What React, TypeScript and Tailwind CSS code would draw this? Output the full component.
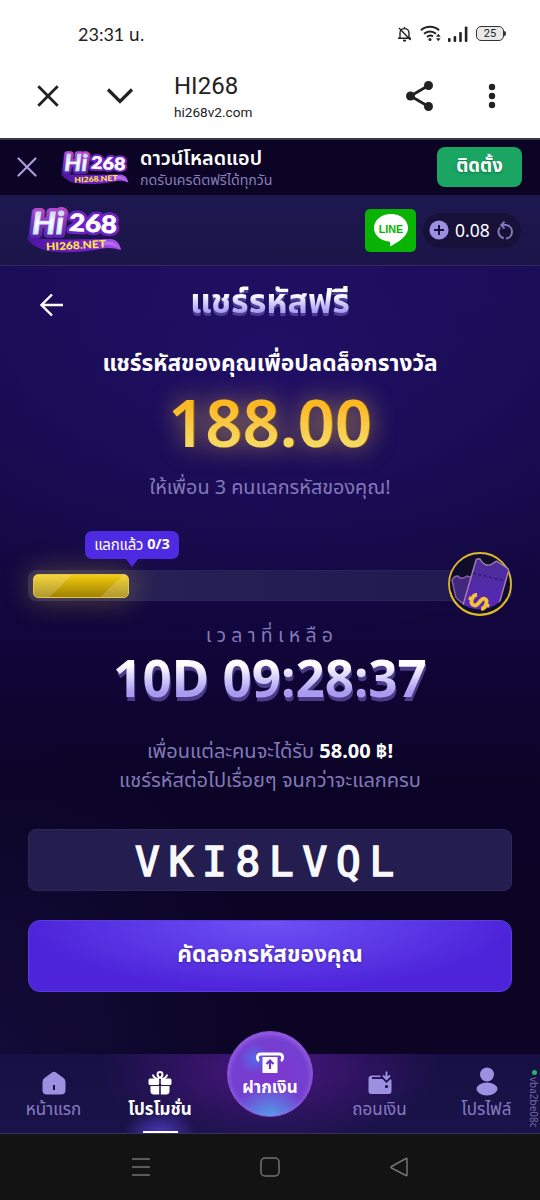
import type { ReactNode } from 'react';

function StatusBar() {
    return (
        <div className="flex h-14 items-center justify-between bg-white pt-[11px] pr-[34px] pl-[78px] text-[#222]">
            <span className="font-['Lato','Noto_Sans_Thai','Noto_Sans',sans-serif] text-[18px] leading-6">23:31 น.</span>
            <div className="flex items-center">
                <svg width="15" height="16" viewBox="0 0 15 16" fill="none" stroke="currentColor" strokeWidth="1.4">
                    <path d="M3 12V7C3 4 5 2.6 7.5 2.6S12 4 12 7v5M1 12.3h13M7.5 1v1.6M2 2l11.5 12" />
                    <path d="M6 14.6h3" strokeWidth="1.8" />
                </svg>
                <svg className="ml-2" width="23" height="17" viewBox="0 0 23 17" fill="none" stroke="currentColor" strokeWidth="2">
                    <path d="M1 5.2C6 .6 14 .6 19 5.2M4 8.8c3.5-3.1 8.5-3.1 12 0M7 12c1.7-1.5 4-1.8 6-.6" />
                    <circle cx="10" cy="14.5" r="1.5" fill="currentColor" stroke="none" />
                    <path d="M16 11.8l2.3-3 2.3 3zM16 13.2l2.3 3 2.3-3z" fill="currentColor" stroke="none" />
                </svg>
                <svg className="ml-[5px]" width="20" height="16" viewBox="0 0 20 16" fill="currentColor">
                    <rect x="0" y="12" width="2.6" height="4" rx="1" />
                    <rect x="5.6" y="10" width="2.6" height="6" rx="1" />
                    <rect x="11.2" y="6" width="2.6" height="10" rx="1" />
                    <rect x="16.8" y="0.5" width="2.6" height="15.5" rx="1" />
                </svg>
                <div className="ml-[8px] flex h-[15px] w-[28px] items-center justify-center rounded-[5px] border-[1.5px] border-[#333] bg-[#e9e9e9] font-['Roboto',sans-serif] text-[11px] leading-none">
                    25
                </div>
                <div className="h-[5px] w-[2px] rounded-r bg-[#333]" />
            </div>
        </div>
    );
}

function BrowserBar() {
    return (
        <div className="flex h-[84px] items-center border-b-2 border-[#3b3948] bg-white pb-[3px] pl-9 font-['Roboto',sans-serif] text-[#222]">
            <svg width="24" height="24" viewBox="0 0 24 24" fill="none" stroke="currentColor" strokeWidth="2.8">
                <path d="M2.3 2.3l19.4 19.4M21.7 2.3L2.3 21.7" />
            </svg>
            <svg className="ml-[46px]" width="28" height="24" viewBox="0 0 28 24" fill="none" stroke="currentColor" strokeWidth="3.2">
                <path d="M2 5.5L14 17.5 26 5.5" />
            </svg>
            <div className="ml-10 flex w-[232px] flex-col">
                <span className="mt-[2px] text-[24px] leading-7">HI268</span>
                <span className="mt-[2px] text-[13.6px] leading-5">hi268v2.com</span>
            </div>
            <svg width="28" height="30" viewBox="0 0 28 30" fill="currentColor">
                <path d="M22.5 4.5L4.5 15l18 10.5" fill="none" stroke="currentColor" strokeWidth="2.8" />
                <circle cx="22.5" cy="4.5" r="4.5" />
                <circle cx="4.5" cy="15" r="4.5" />
                <circle cx="22.5" cy="25.5" r="4.5" />
            </svg>
            <svg className="ml-[54px]" width="8" height="26" viewBox="0 0 8 26" fill="currentColor">
                <circle cx="4" cy="4" r="3.2" />
                <circle cx="4" cy="13" r="3.2" />
                <circle cx="4" cy="22" r="3.2" />
            </svg>
        </div>
    );
}

function Logo({ className }: { className?: string }) {
    return (
        <svg className={className} viewBox="0 0 96 46" overflow="visible">
            <defs>
                <linearGradient id="ribbon" x1="0" x2="1">
                    <stop offset="0" stopColor="#4c16a0" />
                    <stop offset="0.7" stopColor="#7a1fd0" />
                    <stop offset="1" stopColor="#b45cf0" />
                </linearGradient>
                <linearGradient id="ice" x1="0" y1="0" x2="0" y2="1">
                    <stop offset="0" stopColor="#9fb2e2" />
                    <stop offset="0.5" stopColor="#ffffff" />
                    <stop offset="1" stopColor="#a9e6f2" />
                </linearGradient>
                <linearGradient id="halo" x1="0" y1="0" x2="0" y2="1">
                    <stop offset="0" stopColor="#c653cf" />
                    <stop offset="1" stopColor="#4a1fa8" />
                </linearGradient>
            </defs>
            <path d="M1 29c9 5 58 3 84 3 6 1 9 5 10 11-6-2-13-3-21-1-20 4-50 5-61-1-7-3-11-7-12-12z" fill="url(#ribbon)" />
            <path d="M76 34c7-1 13 1 16 6-6-2-11-2-17-1z" fill="#c07af2" opacity="0.7" />
            <g strokeLinejoin="round" fontStyle="italic" fontFamily="'Lato', sans-serif" fontWeight="700" fontSize="31">
                <text x="6" y="27" textLength="32" lengthAdjust="spacingAndGlyphs" fill="url(#halo)" stroke="url(#halo)" strokeWidth="8">Hi</text>
                <text x="6" y="27" textLength="32" lengthAdjust="spacingAndGlyphs" fill="url(#ice)" stroke="#d5e4ff" strokeWidth="1">Hi</text>
            </g>
            <g strokeLinejoin="round" fontFamily="'Lato', sans-serif" fontWeight="900" fontSize="24" transform="rotate(3 66 18)">
                <text x="43" y="25" textLength="48" lengthAdjust="spacingAndGlyphs" fill="#6d22c4" stroke="#6d22c4" strokeWidth="6">268</text>
                <text x="43" y="25" textLength="48" lengthAdjust="spacingAndGlyphs" fill="#ffffff" stroke="#ffffff" strokeWidth="0.6">268</text>
            </g>
            <text
                x="20"
                y="42"
                fontFamily="'Lato', sans-serif"
                fontWeight="900"
                fontSize="10.5"
                textLength="60"
                lengthAdjust="spacingAndGlyphs"
                fill="#ffe93d"
                transform="rotate(-3 50 38)"
            >
                HI268.NET
            </text>
        </svg>
    );
}

function InstallBanner() {
    return (
        <div className="flex h-[55px] items-center bg-[#0b0424] pr-[18px] pb-[2px] pl-[17px]">
            <svg width="20" height="20" viewBox="0 0 20 20" fill="none" stroke="#a99ddd" strokeWidth="2.2" strokeLinecap="round">
                <path d="M1.5 1.5l17 17M18.5 1.5l-17 17" />
            </svg>
            <Logo className="mt-[3px] ml-[23px] h-[34px] w-[69px]" />
            <div className="mt-[2px] ml-[11px] flex flex-1 flex-col whitespace-nowrap">
                <span className="text-[19.8px] leading-6 font-semibold text-white">ดาวน์โหลดแอป</span>
                <span className="text-[14.2px] leading-5 text-[#8a7fbe]">กดรับเครดิตฟรีได้ทุกวัน</span>
            </div>
            <button className="h-10 w-[85px] rounded-lg bg-[#1aa563] pb-1 text-[18.5px] font-bold text-white text-shadow-md">ติดตั้ง</button>
        </div>
    );
}

function Header() {
    return (
        <div className="flex h-[71px] items-center border-b border-[#2f2960] bg-linear-to-b from-[#1d1750] to-[#1c1549] pr-[19px] pl-[26px]">
            <Logo className="h-[46px] w-[96px]" />
            <div className="ml-auto flex h-[43px] w-[51px] items-center justify-center rounded-[5px] bg-[#08b304]">
                <svg width="36" height="35" viewBox="0 0 36 35">
                    <path d="M18 1C8.5 1 1 7 1 15c0 7 6 12.5 15 13.5 2 .5 1 3 .8 5 4-1.8 11-6 14.5-10 2.5-2.8 3.7-5.5 3.7-8.5C35 7 27.5 1 18 1z" fill="#fff" />
                    <text x="18" y="19.5" textAnchor="middle" fontFamily="'Liberation Sans', sans-serif" fontWeight="700" fontSize="10.8" fill="#08b304">
                        LINE
                    </text>
                </svg>
            </div>
            <div className="ml-[7px] flex h-[35px] w-[98px] items-center rounded-full bg-[#171139] pl-[6px]">
                <svg width="20" height="20" viewBox="0 0 20 20">
                    <circle cx="10" cy="10" r="9.6" fill="#9c8ee0" />
                    <path d="M10 5v10M5 10h10" stroke="#171139" strokeWidth="2" />
                </svg>
                <span className="ml-[6px] text-[17.5px] leading-6 text-white">0.08</span>
                <svg className="ml-[7px]" width="17" height="19" viewBox="0 0 17 19" fill="none" stroke="#8177b8" strokeWidth="2">
                    <path d="M3 6.4A6.800 6.800 0 0 0 6.800 17.300M9 17.500A6.800 6.800 0 0 0 9 4H4.500" />
                    <path d="M7.5.8L4.2 4.2l3.3 3.4" />
                </svg>
            </div>
        </div>
    );
}

function TicketBadge() {
    return (
        <svg className="absolute -top-[20px] -right-[2px]" width="66" height="66" viewBox="0 0 66 66">
            <defs>
                <linearGradient id="ticket" x1="0" y1="0" x2="0" y2="1">
                    <stop offset="0" stopColor="#4a2f96" />
                    <stop offset="1" stopColor="#5b25bd" />
                </linearGradient>
                <clipPath id="coin">
                    <path d="M2 33A31 31 0 0 1 33 2h30v31a31 31 0 0 1-61 0z" />
                </clipPath>
            </defs>
            <circle cx="33" cy="33" r="31" fill="#100d2c" />
            <circle cx="33" cy="33" r="31" fill="none" stroke="#dcb92d" strokeWidth="1.8" />
            <g clipPath="url(#coin)" strokeWidth="1.4">
                <path d="M5 29c2-4 4-4 6-4 2 3 5 3 9 0l6 2-8 27-9-7z" fill="#41277f" stroke="#8a62a6" />
                <path d="M14 61L29 9q1.5-2 4-1c4 7 9 8 15 3 1-1 2-1 3 0l9 6q2 1 1.5 3L49 64z" fill="url(#ticket)" stroke="#a97fae" />
                <path d="M26 22l32 8" stroke="#271660" strokeWidth="1.2" strokeDasharray="3 2.5" />
            </g>
            <path d="M3 40A31 31 0 0 0 60 48" fill="none" stroke="#dcb92d" strokeWidth="1.8" />
            <g fill="none" stroke="#f4c233" strokeWidth="3.8" transform="translate(32 51) rotate(112)">
                <path d="M5.5-4.5C4-8.5-5-8.5-5-4S5-1.5 5 3.5-4 9-6 4.5" />
                <path d="M0-11v4M0 7v4" strokeWidth="3.4" />
            </g>
        </svg>
    );
}

function Progress() {
    return (
        <div className="relative mt-[67px] flex h-[31px] w-[484px] items-center rounded-lg border border-[#29225a] bg-linear-to-r from-[#2a2356] to-[#1f1850] px-1">
            <div className="h-6 w-[96px] overflow-hidden rounded-[5px] border border-[#e2c64a] bg-linear-to-b from-[#f2cb10] to-[#a08205] shadow-[0_0_28px_4px_rgba(220,190,60,0.3)]">
                <div className="h-full bg-[linear-gradient(135deg,rgba(255,255,255,0.18)_0_32%,transparent_33%_76%,rgba(255,255,255,0.18)_77%)]" />
            </div>
            <div className="absolute -top-[40px] left-[56px] flex h-7 w-[94px] items-center justify-center gap-1 rounded-[7px] bg-[#4e2ae3] pb-0.5 text-[15px] whitespace-nowrap text-white">
                <span className="tracking-[-0.2px]">แลกแล้ว</span>
                <span className="text-[14.5px] font-bold">0/3</span>
                <svg className="absolute top-7 left-[41px]" width="12" height="8" viewBox="0 0 12 8">
                    <path d="M0 0h12L6 8z" fill="#4e2ae3" />
                </svg>
            </div>
            <TicketBadge />
        </div>
    );
}

function Share() {
    return (
        <div className="flex h-[788px] flex-col items-center bg-[radial-gradient(ellipse_75%_36%_at_50%_12%,rgba(42,20,125,0.5),transparent),radial-gradient(ellipse_50%_40%_at_0%_100%,rgba(24,16,70,0.6),transparent),linear-gradient(#180c52,#150946_30%,#10063a_48%,#0b0426_66%,#0b0424)] px-7 whitespace-nowrap">
            <div className="flex h-[76px] w-full items-center">
                <svg className="mt-[2px] ml-3" width="24" height="24" viewBox="0 0 24 24" fill="none" stroke="#fff" strokeWidth="2.4">
                    <path d="M23 12H2M12 1.5L1.5 12 12 22.5" />
                </svg>
                <h1 className="-mt-2 flex-1 bg-linear-to-b from-white from-40% to-[#a99cf0] to-70% bg-clip-text pr-9 text-center text-[34px] leading-[60px] font-bold text-transparent drop-shadow-[0_3px_0_#4b3c97]">
                    แชร์รหัสฟรี
                </h1>
            </div>
            <h2 className="mt-[3px] text-[22.7px] leading-9 font-bold text-white">แชร์รหัสของคุณเพื่อปลดล็อกรางวัล</h2>
            <div className="-mt-px bg-linear-to-b from-[#fcb822] from-30% to-[#f6d860] to-75% bg-clip-text text-[65px] leading-[84px] font-semibold text-transparent [filter:drop-shadow(1px_0_0_#9a6a0c)_drop-shadow(0_0_12px_rgba(240,195,80,0.6))]">
                188.00
            </div>
            <p className="mt-[7px] text-[19.8px] leading-8 text-[#8479b9]">ให้เพื่อน 3 คนแลกรหัสของคุณ!</p>
            <Progress />
            <p className="mt-5 pl-1 text-[19.5px] leading-7 tracking-[5.2px] text-[#8479b9]">เวลาที่เหลือ</p>
            <div className="-mt-0.5 bg-linear-to-b from-white from-30% to-[#a99cf0] to-75% bg-clip-text text-[51.2px] leading-[60px] font-bold text-transparent drop-shadow-[1px_4px_0_#4b3c87]">
                10D 09:28:37
            </div>
            <p className="mt-[29px] text-[20px] leading-[29px] text-[#8479b9]">
                เพื่อนแต่ละคนจะได้รับ <b className="text-white">58.00 ฿!</b>
            </p>
            <p className="text-[20px] leading-[29px] text-[#8479b9]">แชร์รหัสต่อไปเรื่อยๆ จนกว่าจะแลกครบ</p>
            <div className="mt-[35px] flex h-[62px] w-[484px] shrink-0 items-center justify-center rounded-lg border border-[#2d2659] bg-[#231d50] pt-[5px] pr-[2px] font-['DejaVu_Sans_Mono',monospace] text-[41px] tracking-[8.8px] text-[#f8f8fb] [-webkit-text-stroke:1.6px_#f8f8fb]">
                VKI8LVQL
            </div>
            <button className="mt-[29px] h-[72px] w-[484px] shrink-0 rounded-xl border border-[#5a3fe0] bg-[radial-gradient(ellipse_50%_100%_at_50%_0%,#6d52f5,#4e24da)] pb-1 text-[22.7px] font-bold text-white text-shadow-md">
                คัดลอกรหัสของคุณ
            </button>
        </div>
    );
}

function NavItem({ label, active, children }: { label: string; active?: boolean; children: ReactNode }) {
    return (
        <div
            className={
                active
                    ? 'relative flex w-[106px] flex-col items-center bg-[radial-gradient(ellipse_36px_24px_at_50%_100%,#4a38b8,transparent)] pt-[15px] font-bold text-white'
                    : 'relative flex w-[107px] flex-col items-center pt-[15px] text-[#887cc0]'
            }
        >
            <div className="flex h-7 items-center">{children}</div>
            <span className="text-[17px] leading-6">{label}</span>
            {active && <div className="absolute bottom-0 h-[2px] w-[35px] bg-white" />}
        </div>
    );
}

function BottomNav() {
    return (
        <div className="relative flex h-20 border-b border-[#35315a] bg-[radial-gradient(ellipse_170px_75px_at_50%_20%,#4a1680,transparent),linear-gradient(#171044,#191349)] whitespace-nowrap">
            <NavItem label="หน้าแรก">
                <svg width="24" height="24" viewBox="0 0 24 24" fill="#9d90e0">
                    <path d="M10 1.5q2-1.3 4 0l7.5 5.5Q23.5 8.5 23.5 11v8q0 4.5-4.5 4.5H5Q.5 23.5.5 19v-8Q.5 8.500 2.500 7z" />
                    <path d="M12 14v5" stroke="#171044" strokeWidth="2" />
                </svg>
            </NavItem>
            <NavItem label="โปรโมชั่น" active>
                <svg width="24" height="24" viewBox="0 0 24 24" fill="#fff">
                    <rect x="0.5" y="7.5" width="10.7" height="6.5" rx="1.5" />
                    <rect x="12.8" y="7.5" width="10.7" height="6.5" rx="1.5" />
                    <path d="M2.5 15h8.7v8.5H6q-3.5 0-3.5-3.5zM12.8 15h8.7v5q0 3.5-3.5 3.5h-5.2z" />
                    <path d="M11 8C8 8 5 6 5 3.5M13 8c3 0 6-2 6-4.500M12 7C8.500 5 9 1 12 1s3.500 4 0 6z" fill="none" stroke="#fff" strokeWidth="2" />
                </svg>
            </NavItem>
            <div className="w-[113px]" />
            <NavItem label="ถอนเงิน">
                <svg width="24" height="24" viewBox="0 0 24 24" fill="#9d90e0">
                    <path d="M.5 8Q.5 4.5 4 4.5h8.5V6H4v2h18q1.5 0 1.5 1.5V20q0 3-3 3h-17q-3 0-3-3z" />
                    <path d="M18.5.5v7M15 5l3.5 3.5L22 5" fill="none" stroke="#1b1150" strokeWidth="5" />
                    <path d="M18.5.5v7M15 4.5L18.5 8 22 4.500" fill="none" stroke="#9d90e0" strokeWidth="2" />
                    <circle cx="18.5" cy="15.5" r="1.6" fill="#171044" />
                </svg>
            </NavItem>
            <NavItem label="โปรไฟล์">
                <svg className="-mt-1" width="22" height="29" viewBox="0 0 22 29" fill="#9d90e0">
                    <circle cx="11" cy="7.5" r="7" />
                    <ellipse cx="11" cy="22" rx="10.5" ry="6.5" />
                </svg>
            </NavItem>
            <div className="absolute -top-[23px] left-[227px] flex h-[86px] w-[86px] flex-col items-center rounded-full border border-[#8a55d8] bg-[radial-gradient(circle_at_32%_32%,#5668e8_0%,transparent_20%),radial-gradient(circle_at_50%_105%,#4fa5ec_0%,transparent_38%),radial-gradient(circle_at_50%_50%,#8036cf_0%,#7340d0_60%,#9156e8_100%)] pt-5 text-white shadow-[inset_0_2px_5px_rgba(220,140,255,0.4)]">
                <svg width="28" height="22" viewBox="0 0 28 22" fill="none" stroke="#fff" strokeWidth="2.8">
                    <path d="M3 9Q1.300 8 1.400 5.500 1.400 2 5 2h18q3.600 0 3.600 3.500Q26.700 8 25 9" />
                    <path d="M6.5 5h15v16h-15z" fill="#fff" stroke="none" />
                    <path d="M14 17V9M10.5 12L14 8.5l3.5 3.5" stroke="#6b35c8" strokeWidth="2.2" />
                </svg>
                <span className="mt-px text-[17px] leading-6 font-bold">ฝากเงิน</span>
            </div>
            <div className="absolute top-4 right-px flex flex-col items-center gap-0.5">
                <div className="h-[5px] w-[5px] rounded-full bg-[#1fb573]" />
                <span className="text-[10px] leading-[10px] text-[#71679f] [writing-mode:vertical-rl]">vba2be08c</span>
            </div>
        </div>
    );
}

function SystemNav() {
    return (
        <div className="flex h-[66px] items-center justify-center gap-[110px] bg-[#131313]">
            <svg width="18" height="20" viewBox="0 0 18 20" stroke="#737373" strokeWidth="1.5">
                <path d="M0 2h18M0 10h18M0 18h18" />
            </svg>
            <svg width="20" height="20" viewBox="0 0 20 20" fill="none" stroke="#737373" strokeWidth="1.5">
                <rect x="1" y="1" width="18" height="18" rx="4" />
            </svg>
            <svg width="18" height="20" viewBox="0 0 18 20" fill="none" stroke="#737373" strokeWidth="1.5" strokeLinejoin="round">
                <path d="M17 2v16q0 1-1 .5L1.5 11q-1-1 0-1.5L16 1.5q1-.5 1 .5z" />
            </svg>
        </div>
    );
}

export default function App() {
    return (
        <div className="flex h-[1200px] w-[540px] flex-col overflow-hidden bg-[#0b0424] font-['Noto_Sans','Noto_Sans_Thai',sans-serif]">
            <StatusBar />
            <BrowserBar />
            <InstallBanner />
            <Header />
            <Share />
            <BottomNav />
            <SystemNav />
        </div>
    );
}
